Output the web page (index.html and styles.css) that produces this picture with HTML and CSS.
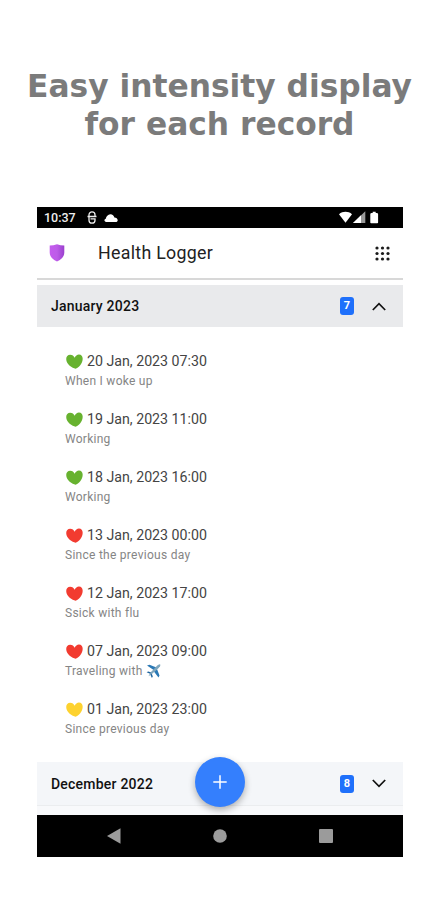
FILE: index.html
```html
<!DOCTYPE html>
<html lang="en">
<head>
<meta charset="utf-8">
<title>Health Logger</title>
<link rel="stylesheet" href="styles.css">
</head>
<body>
<svg class="defs" width="0" height="0" aria-hidden="true">
  <symbol id="heart" viewBox="0 0 16 14"><path d="M9 13.900C6 13.200.2 9.800.2 4.700.2 2.300 1.700.7 3.900.7 6 .7 7.300 1.900 8 3.400 9 1.500 10.400.3 12.200.3c2.200 0 3.500 1.600 3.500 4 0 4.500-3.800 8.300-6.800 9.600z"/></symbol>
  <symbol id="plane" viewBox="0 0 14 14"><path fill="#2b79b5" d="M.5 1.500l2.500-.8 7 2.700-2.500 2.900zM10.400 4.800l2.600 6.700-1 2-4.600-5.900z"/><path fill="#7fa6bd" d="M13.700.4c.5.8-.4 2.400-1.500 3.500L5.400 10 1.900 12.200 4 8.600 10.300 2C11.500.8 13 0 13.700.4z"/><path fill="#1f659f" d="M.1 8.200l1.500-.6 2.800.7-.8 1.500zM5.300 9.800l1 2.700-.9 1.400-1.500-3.200z"/></symbol>
</svg>
<h1 class="headline">Easy intensity display<br>for each record</h1>
<main class="phone">
  <div class="status">
    <span class="time">10:37</span>
    <svg class="s-app" width="12" height="13" viewBox="0 0 12 13" fill="none" stroke="#eee" stroke-width="1.300"><path d="M3 5V3.800a3 3 0 0 1 6 0V5M1.500 5.500h9M3 5.500v3.700a3 3 0 0 0 6 0V7.800H4.500"/></svg>
    <svg class="s-cloud" width="14" height="8" viewBox="0 0 14 8" fill="#fff"><path d="M2.200 8C0 7.900-.2 5.200 1.800 4.700 2.200 2.500 4 .2 6.300.2c2.400 0 3.500 1.500 4.100 3.300 1.800.2 3.300 1.200 3.300 2.700C13.700 7.300 12.900 8 11.800 8z"/></svg>
    <svg class="s-right" width="40" height="13" viewBox="0 0 40 13"><path fill="#fff" d="M0 3.200C3.800 0 9.200 0 13 3.200L6.500 11.800z"/><path fill="#999" d="M14 12L26.300.3V12z"/><path fill="#fff" d="M14 12l8-7.800V12z"/><path fill="#fff" d="M32.700 2h1V.7h3V2h1q1.400 0 1.400 1.200v8.300q0 .8-.8.800h-6.200q-.8 0-.8-.8V3.200Q31.300 2 32.700 2z"/></svg>
  </div>
  <header class="appbar">
    <svg width="16" height="18" viewBox="0 0 16 18"><defs><linearGradient id="g" x1="0" y1="0" x2="1" y2="0"><stop offset="0" stop-color="#c45bee"/><stop offset=".5" stop-color="#bd5ce8"/><stop offset="1" stop-color="#9a40ce"/></linearGradient></defs><path fill="url(#g)" d="M.7 1.500Q4.500 1.500 8 .3q3.500 1.200 7.300 1.200V8.500Q15.300 14.300 8 17.600.7 14.300.7 8.500z"/></svg>
    <span class="app-title">Health Logger</span>
    <svg class="apps" width="15" height="15" viewBox="0 0 15 15" fill="#1b1b1b"><circle cx="2" cy="2" r="1.600"/><circle cx="7.500" cy="2" r="1.600"/><circle cx="13" cy="2" r="1.600"/><circle cx="2" cy="7.500" r="1.600"/><circle cx="7.500" cy="7.500" r="1.600"/><circle cx="13" cy="7.500" r="1.600"/><circle cx="2" cy="13" r="1.600"/><circle cx="7.500" cy="13" r="1.600"/><circle cx="13" cy="13" r="1.600"/></svg>
  </header>
  <section class="month open">
    <span class="month-name">January 2023</span><span class="badge">7</span>
    <svg width="14" height="9" viewBox="0 0 14 9" fill="none" stroke="#111" stroke-width="1.700"><path d="M.8 8L7 1.600 13.200 8"/></svg>
  </section>
  <ul class="records">
    <li><div class="date"><svg class="heart green"><use href="#heart"/></svg><span>20 Jan, 2023 07:30</span></div><div class="note">When I woke up</div></li>
    <li><div class="date"><svg class="heart green"><use href="#heart"/></svg><span>19 Jan, 2023 11:00</span></div><div class="note">Working</div></li>
    <li><div class="date"><svg class="heart green"><use href="#heart"/></svg><span>18 Jan, 2023 16:00</span></div><div class="note">Working</div></li>
    <li><div class="date"><svg class="heart red"><use href="#heart"/></svg><span>13 Jan, 2023 00:00</span></div><div class="note">Since the previous day</div></li>
    <li><div class="date"><svg class="heart red"><use href="#heart"/></svg><span>12 Jan, 2023 17:00</span></div><div class="note">Ssick with flu</div></li>
    <li><div class="date"><svg class="heart red"><use href="#heart"/></svg><span>07 Jan, 2023 09:00</span></div><div class="note">Traveling with <svg class="plane"><use href="#plane"/></svg></div></li>
    <li><div class="date"><svg class="heart yellow"><use href="#heart"/></svg><span>01 Jan, 2023 23:00</span></div><div class="note">Since previous day</div></li>
  </ul>
  <section class="month closed">
    <span class="month-name">December 2022</span><span class="badge">8</span>
    <svg width="14" height="9" viewBox="0 0 14 9" fill="none" stroke="#111" stroke-width="1.700"><path d="M.8 1L7 7.400 13.200 1"/></svg>
  </section>
  <div class="rest"></div>
  <nav class="nav">
    <svg width="14" height="16" viewBox="0 0 14 16" fill="#9b9b9b"><path d="M0 8L13.500.2v15.600z"/></svg>
    <svg width="14" height="14" viewBox="0 0 14 14" fill="#9b9b9b"><circle cx="7" cy="7" r="6.800"/></svg>
    <svg width="14" height="14" viewBox="0 0 14 14" fill="#9b9b9b"><rect width="14" height="14" rx="1"/></svg>
  </nav>
  <div class="fab"><svg width="14" height="14" viewBox="0 0 14 14" stroke="#fff" stroke-width="1.500"><path d="M7 .3v13.400M.3 7h13.400"/></svg></div>
</main>
</body>
</html>
```
FILE: styles.css
```css
* { box-sizing: border-box; }
body { margin: 0; height: 900px; background: #fff; font-family: Roboto, "Liberation Sans", sans-serif; overflow: hidden; }
svg { display: block; flex: none; }
.defs { position: absolute; }
.headline { margin: 0; padding-top: 67px; height: 207px; text-align: center; white-space: nowrap; font: bold 31.3px/38px "DejaVu Sans", sans-serif; color: #7b7b7b; }
.phone { position: relative; width: 366px; height: 650px; margin-left: 37px; display: flex; flex-direction: column; }
.status { height: 21px; background: #000; display: flex; align-items: center; padding: 0 24px 0 7px; color: #eee; }
.time { width: 42px; font-size: 12.5px; font-weight: 500; }
.s-cloud { margin-left: 6px; }
.s-right { margin-left: auto; }
.appbar { height: 52px; border-bottom: 2px solid #d8d8d8; display: flex; align-items: center; padding: 0 13px 0 12px; }
.app-title { margin: -1px 0 0 33px; font-size: 17.8px; letter-spacing: .3px; color: #222; }
.apps { margin-left: auto; }
.month { display: flex; align-items: center; padding: 0 17px 0 14px; }
.open { margin-top: 5px; height: 42px; background: #e9eaec; }
.closed { height: 44px; background: #f4f6f9; border-bottom: 1px solid #ebedef; }
.month-name { font-size: 14px; font-weight: 500; letter-spacing: .22px; color: #111; }
.badge { margin-left: auto; margin-right: 18px; width: 14px; height: 18px; border-radius: 3px; background: #1f70fb; color: #fff; font-size: 11px; font-weight: 700; line-height: 18px; text-align: center; }
.records { margin: 0; padding: 24px 0 0 28px; height: 435px; list-style: none; }
.records li { height: 58px; }
.date { height: 20px; display: flex; align-items: center; gap: 4px; font-size: 14.2px; color: #444; }
.heart { width: 17px; height: 15px; margin-left: 1px; }
.green { fill: #67b22f; }
.red { fill: #f23b30; }
.yellow { fill: #fdd22f; }
.note { height: 19px; display: flex; align-items: center; gap: 5px; font-size: 12px; letter-spacing: .27px; color: #858585; }
.plane { width: 15px; height: 14px; margin-left: -2px; }
.rest { height: 9px; background: #f8f9fb; }
.nav { height: 42px; background: #000; display: flex; align-items: center; justify-content: space-between; padding: 0 70px; }
.fab { position: absolute; left: 158px; top: 550px; width: 50px; height: 50px; border-radius: 50%; background: #347ffd; display: flex; align-items: center; justify-content: center; box-shadow: 0 3px 7px rgba(0,0,0,.3); }
```
